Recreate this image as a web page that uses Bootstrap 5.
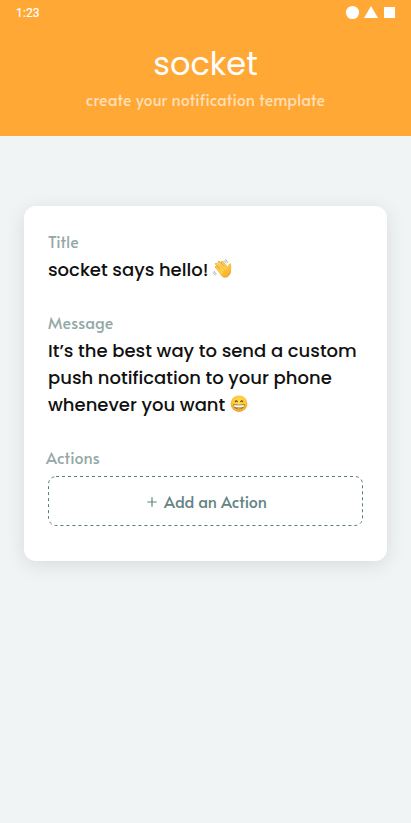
<!DOCTYPE html>
<html lang="en">
<head>
<meta charset="utf-8">
<meta name="viewport" content="width=device-width, initial-scale=1">
<title>socket</title>
<link rel="stylesheet" href="https://cdn.jsdelivr.net/npm/bootstrap@5.3.0/dist/css/bootstrap.min.css">
<style>
body{background:#f0f4f5;font-family:Poppins,Inter,"Open Sans",sans-serif;min-height:823px;overflow:hidden;color:#111}
.app-header{background:#ffa836;height:136px}
.status-bar{height:26px;padding:0 16px}
.clock{font:400 12px/26px Roboto,sans-serif;letter-spacing:.15px;-webkit-text-stroke:.2px #fff}
.brand{font-size:32px;line-height:48px;font-weight:400;margin-top:14px}
.soft{font-family:Alata,Lato,sans-serif;font-size:16px;line-height:22px;letter-spacing:.15px}
.tagline{color:#ffdfb5}
.template-card{margin:70px 24px 0;height:355px;border-radius:12px;border:0;padding:24px;box-shadow:0 4px 20px rgba(0,0,0,.1)}
.field-label{color:#94a9a7}
.actions-label{margin-left:-2px}
.value{font-size:18px;font-weight:500;line-height:27px;margin-top:4px;margin-bottom:28px;white-space:nowrap}
.emoji{width:20px;height:20px;vertical-align:-3px;margin-left:-1px}
.add-action{height:50px;margin-top:8px;padding:0 0 0 3px;color:#638483;letter-spacing:0}
.plus{margin-right:7px;margin-top:2px}
.dash-frame{left:0;top:0}
</style>
<script src="https://cdn.jsdelivr.net/npm/bootstrap@5.3.0/dist/js/bootstrap.bundle.min.js"></script>
</head>
<body>
<header class="app-header text-white text-center">
  <div class="status-bar d-flex justify-content-between">
    <span class="clock">1:23</span>
    <svg width="50" height="26" fill="#fff" aria-hidden="true"><circle cx="7.5" cy="12.5" r="6.6"/><path d="M26 6l7 12H19z"/><path d="M39 7h11v11H39z"/></svg>
  </div>
  <h1 class="brand mb-0">socket</h1>
  <div class="soft tagline">create your notification template</div>
</header>
<main class="card template-card">
  <div class="soft field-label">Title</div>
  <div class="value">socket says hello!
    <svg class="emoji" viewBox="0 0 20 20" aria-label="waving hand">
      <defs><linearGradient id="skin" x1="0" y1="0" x2=".6" y2="1"><stop offset="0" stop-color="#ffd550"/><stop offset="1" stop-color="#f6b12c"/></linearGradient></defs>
      <g transform="translate(.3 -.2) scale(1.04)">
      <g fill="none" stroke="#e0962a" stroke-width="2.3" stroke-linecap="round"><path d="M3.700 8l5 5M3.900 4.900l6 6M6.300 3.100l6 6.400M9.500 3.300l4.500 5.300"/></g>
      <path d="M5.400 12l4-5 5.100 1.600c.8-.9.900-2.100 1.100-3.100.3-1.400 2.600-1.200 2.500.4 0 2 .3 3.200-.2 5.800-.4 2.300-1.300 4.200-3 5.300-2.200 1.400-4.600.9-6.400-.9z" fill="url(#skin)"/>
      <path d="M9.600 17q2.900 1.700 5.500-.2 2.100-1.600 2.700-5" fill="none" stroke="#e39a26" stroke-width=".7"/>
      <g fill="none" stroke="#ffd050" stroke-width="1.600" stroke-linecap="round"><path d="M3.700 8l5.500 5.500M3.900 4.900l6.600 6.600M6.300 3.100l6.200 6.700M9.500 3.300l4.500 5.500"/></g>
      <g fill="none" stroke="#8b9297" stroke-width=".65" stroke-linecap="round"><path d="M11.300 2q1.500.3 2 1.900M12.600.9q1.900.6 2.300 2.600M1.900 12.200q.3 1.800 2 2.200M.8 13.300q.5 1.900 2.200 2.400"/></g>
      </g>
    </svg>
  </div>
  <div class="soft field-label">Message</div>
  <div class="value">It’s the best way to send a custom<br>push notification to your phone<br>whenever you want
    <svg class="emoji" viewBox="0 0 20 20" aria-label="grinning face">
      <defs><radialGradient id="face" cx=".5" cy=".42" r=".58"><stop offset="0" stop-color="#ffe552"/><stop offset=".65" stop-color="#fdc93c"/><stop offset="1" stop-color="#ec9a22"/></radialGradient></defs>
      <circle cx="10" cy="9.700" r="8.300" fill="url(#face)"/>
      <path d="M6.300 7.800q1-2 2 0M11.700 7.800q1-2 2 0" fill="none" stroke="#6b3b14" stroke-width="1.100" stroke-linecap="round"/>
      <path d="M4.300 10.300q5.700.8 11.400 0c0 3.100-2.400 5-5.700 5s-5.700-1.900-5.700-5z" fill="#8a5c24"/>
      <path d="M5 11q5 .6 10 0 0 1.200-.5 1.900h-9q-.5-.7-.5-1.900zM6.200 13.400h7.600q-1.500 1.100-3.800 1.100t-3.800-1.100z" fill="#fffaf0"/>
    </svg>
  </div>
  <div class="soft field-label actions-label">Actions</div>
  <button type="button" class="soft add-action btn border-0 w-100 position-relative d-flex align-items-center justify-content-center">
    <svg class="dash-frame position-absolute" width="315" height="50" aria-hidden="true"><rect x=".5" y=".5" width="314" height="49" rx="7.500" fill="none" stroke="#56807c" stroke-dasharray="3 3"/></svg>
    <svg class="plus" width="10" height="10" aria-hidden="true"><path d="M5 .3v9.400M.3 5h9.400" stroke="#638483" stroke-width="1.200"/></svg>
    <span>Add an Action</span>
  </button>
</main>
</body>
</html>
